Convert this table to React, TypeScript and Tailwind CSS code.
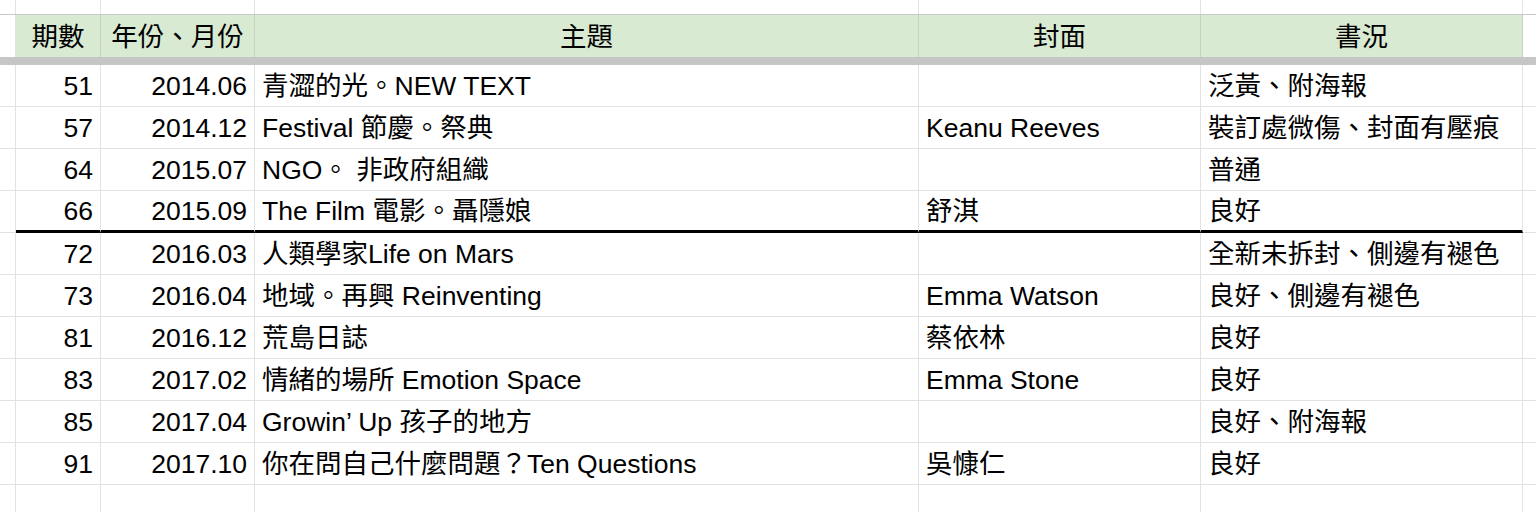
import React from "react";

type Row = [string, string, string, string, string];

const rows: Row[] = [
  ["51", "2014.06", "青澀的光。NEW TEXT", "", "泛黃、附海報"],
  ["57", "2014.12", "Festival 節慶。祭典", "Keanu Reeves", "裝訂處微傷、封面有壓痕"],
  ["64", "2015.07", "NGO。 非政府組織", "", "普通"],
  ["66", "2015.09", "The Film 電影。聶隱娘", "舒淇", "良好"],
  ["72", "2016.03", "人類學家Life on Mars", "", "全新未拆封、側邊有褪色"],
  ["73", "2016.04", "地域。再興 Reinventing", "Emma Watson", "良好、側邊有褪色"],
  ["81", "2016.12", "荒島日誌", "蔡依林", "良好"],
  ["83", "2017.02", "情緒的場所 Emotion Space", "Emma Stone", "良好"],
  ["85", "2017.04", "Growin’ Up 孩子的地方", "", "良好、附海報"],
  ["91", "2017.10", "你在問自己什麼問題？Ten Questions", "吳慷仁", "良好"],
];

// column widths include each cell's right border
const W = ["w-[16px]", "w-[85px]", "w-[154px]", "w-[664px]", "w-[282px]", "w-[322px]"];

function EdgeCells({ h, children }: { h: string; children: React.ReactNode }) {
  return (
    <div className={`flex ${h}`}>
      <div className={`${W[0]} shrink-0 border-r border-b border-[#e2e2e2]`} />
      {children}
      <div className="flex-1 border-b border-[#e2e2e2]" />
    </div>
  );
}

function DataRow({ r, thick }: { r: Row; thick: boolean }) {
  const b = thick ? "border-b-[3px] border-b-black" : "border-b border-b-[#e2e2e2]";
  const cell = `shrink-0 flex items-center pt-[2px] border-r border-r-[#e2e2e2] ${b} whitespace-nowrap overflow-hidden`;
  return (
    <EdgeCells h="h-[42px]">
      <div className={`${W[1]} ${cell} justify-end pr-[7px]`}>{r[0]}</div>
      <div className={`${W[2]} ${cell} justify-end pr-[7px]`}>{r[1]}</div>
      <div className={`${W[3]} ${cell} pl-[7px]`}>{r[2]}</div>
      <div className={`${W[4]} ${cell} pl-[7px]`}>{r[3]}</div>
      <div className={`${W[5]} ${cell} pl-[7px]`}>{r[4]}</div>
    </EdgeCells>
  );
}

export default function App() {
  const head = ["期數", "年份、月份", "主題", "封面", "書況"];
  return (
    <div
      className="w-[1536px] h-[512px] overflow-hidden bg-white text-black text-[26.5px] leading-none"
      style={{ fontFamily: '"Liberation Sans", Arial, "Noto Sans CJK TC", sans-serif' }}
    >
      {/* top partial row */}
      <div className="flex h-[15px] border-b border-[#c8c8c8]">
        {W.map((w, i) => (
          <div key={i} className={`${w} shrink-0 border-r border-[#e2e2e2]`} />
        ))}
        <div className="flex-1" />
      </div>

      {/* header */}
      <div className="flex h-[42px]">
        <div className={`${W[0]} shrink-0 border-r border-[#e2e2e2]`} />
        {head.map((t, i) => (
          <div
            key={t}
            className={`${W[i + 1]} shrink-0 flex items-center justify-center pt-[2px] bg-[#d9ead3] border-r border-[#c6d3c0]`}
          >
            {t}
          </div>
        ))}
        <div className="flex-1" />
      </div>

      {/* frozen rows divider */}
      <div className="h-[8px] bg-[#c6c6c6]" />

      {rows.map((r) => (
        <DataRow key={r[0]} r={r} thick={r[0] === "66"} />
      ))}

      {/* empty trailing row */}
      <div className="flex h-[42px]">
        {W.map((w, i) => (
          <div key={i} className={`${w} shrink-0 border-r border-[#e2e2e2]`} />
        ))}
        <div className="flex-1" />
      </div>
    </div>
  );
}
